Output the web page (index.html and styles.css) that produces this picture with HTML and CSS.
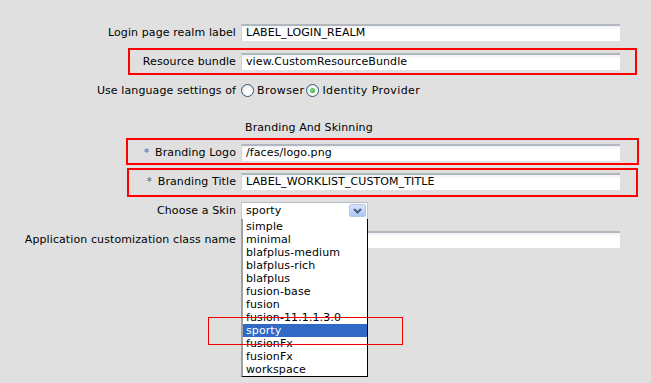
FILE: index.html
```html
<!DOCTYPE html>
<html>
<head>
<meta charset="utf-8">
<link rel="stylesheet" href="styles.css">
</head>
<body>
<div class="page">
  <div class="form">
    <div class="row">
      <label class="lbl">Login page realm label</label>
      <div class="field"><div class="input">LABEL_LOGIN_REALM</div></div>
    </div>
    <div class="row">
      <label class="lbl">Resource bundle</label>
      <div class="field"><div class="input">view.CustomResourceBundle</div></div>
    </div>
    <div class="row">
      <label class="lbl">Use language settings of</label>
      <div class="field radios">
        <span class="radio"></span><span class="rtext">Browser</span>
        <span class="radio checked"></span><span class="rtext">Identity Provider</span>
      </div>
    </div>
    <div class="row heading">
      <span></span>
      <div class="htext">Branding And Skinning</div>
    </div>
    <div class="row">
      <label class="lbl"><span class="req">*</span> Branding Logo</label>
      <div class="field"><div class="input">/faces/logo.png</div></div>
    </div>
    <div class="row">
      <label class="lbl"><span class="req">*</span> Branding Title</label>
      <div class="field"><div class="input">LABEL_WORKLIST_CUSTOM_TITLE</div></div>
    </div>
    <div class="row">
      <label class="lbl">Choose a Skin</label>
      <div class="field">
        <div class="select">
          <span class="selval">sporty</span>
          <span class="arrow"><svg width="9" height="6" viewBox="0 0 9 6"><path d="M1 1 L4.5 4.5 L8 1" fill="none" stroke="#4a5e82" stroke-width="2"/></svg></span>
        </div>
      </div>
    </div>
    <div class="row">
      <label class="lbl">Application customization class name</label>
      <div class="field"><div class="input"></div></div>
    </div>
  </div>

  <ul class="list">
    <li>simple</li>
    <li>minimal</li>
    <li>blafplus-medium</li>
    <li>blafplus-rich</li>
    <li>blafplus</li>
    <li>fusion-base</li>
    <li>fusion</li>
    <li>fusion-11.1.1.3.0</li>
    <li class="sel">sporty</li>
    <li>fusionFx</li>
    <li>fusionFx</li>
    <li>workspace</li>
  </ul>

  <div class="mark m1"></div>
  <div class="mark m2"></div>
  <div class="mark m3"></div>
  <div class="mark m4"></div>
</div>
</body>
</html>
```

FILE: styles.css
```css
html, body {
  margin: 0;
  padding: 0;
  background: #e0e0e0;
}
body {
  width: 651px;
  height: 383px;
  overflow: hidden;
  font-family: "DejaVu Sans", "Liberation Sans", sans-serif;
  font-size: 11px;
  letter-spacing: 0.1px;
  color: #000;
}
.page {
  position: relative;
  width: 651px;
  height: 383px;
}
.form {
  display: flex;
  flex-direction: column;
  padding-top: 18px;
}
.row {
  display: grid;
  grid-template-columns: 236px 380px;
  column-gap: 5px;
  height: 29px;
  align-items: center;
}
.lbl {
  text-align: right;
  white-space: nowrap;
}
.req {
  color: #3b6ea5;
  margin-right: 2px;
}
.input {
  box-sizing: border-box;
  height: 17px;
  width: 379px;
  border-top: 2px solid #b2b6be;
  border-left: 1px solid #cfd2d7;
  background: linear-gradient(#eef0f2, #ffffff 4px);
  padding: 0 4px;
  line-height: 14px;
  white-space: nowrap;
}
.radios {
  display: flex;
  align-items: center;
}
.radio {
  box-sizing: border-box;
  width: 13px;
  height: 13px;
  border-radius: 50%;
  border: 1px solid #2f5580;
  background: radial-gradient(circle at 65% 65%, #ffffff 30%, #dcdcd6 100%);
  margin-right: 3px;
  position: relative;
}
.radio.checked::after {
  content: "";
  position: absolute;
  left: 3px;
  top: 3px;
  width: 5px;
  height: 5px;
  border-radius: 50%;
  background: radial-gradient(circle at 40% 40%, #7fe07f, #1f9a1f);
}
.rtext {
  margin-right: 2px;
  letter-spacing: 0.4px;
}
.heading {
  height: 33px;
  align-items: start;
}
.htext {
  padding-top: 16px;
  padding-left: 4px;
}
.select {
  box-sizing: border-box;
  width: 127px;
  height: 18px;
  border: 1px solid #c3c7cf;
  border-top-color: #b4b8c0;
  background: #fff;
  display: flex;
  align-items: center;
  justify-content: space-between;
  padding-left: 4px;
  padding-right: 1px;
}
.arrow {
  box-sizing: border-box;
  width: 17px;
  height: 13px;
  border: 1px solid #b3c7ea;
  border-radius: 2px;
  background: linear-gradient(#d6e3fb, #aec7f2);
  display: flex;
  align-items: center;
  justify-content: center;
}
.list {
  position: absolute;
  left: 241px;
  top: 219px;
  width: 127px;
  box-sizing: border-box;
  margin: 0;
  padding: 1px 0 0 0;
  list-style: none;
  background: #fff;
  border-left: 2px solid #a0a0a0;
  border-right: 1px solid #000;
  border-bottom: 1px solid #000;
}
.list li {
  height: 13px;
  line-height: 13px;
  padding-left: 3px;
  white-space: nowrap;
}
.list li.sel {
  background: #316ac5;
  color: #fff;
}
.mark {
  position: absolute;
  box-sizing: border-box;
  border: 2px solid #f00;
}
.m1 { left: 128px; top: 48px; width: 509px; height: 27px; }
.m2 { left: 126px; top: 138px; width: 513px; height: 27px; }
.m3 { left: 127px; top: 168px; width: 511px; height: 29px; }
.m4 { left: 208px; top: 317px; width: 195px; height: 28px; border-width: 1px; border-color: #e00; }
```
